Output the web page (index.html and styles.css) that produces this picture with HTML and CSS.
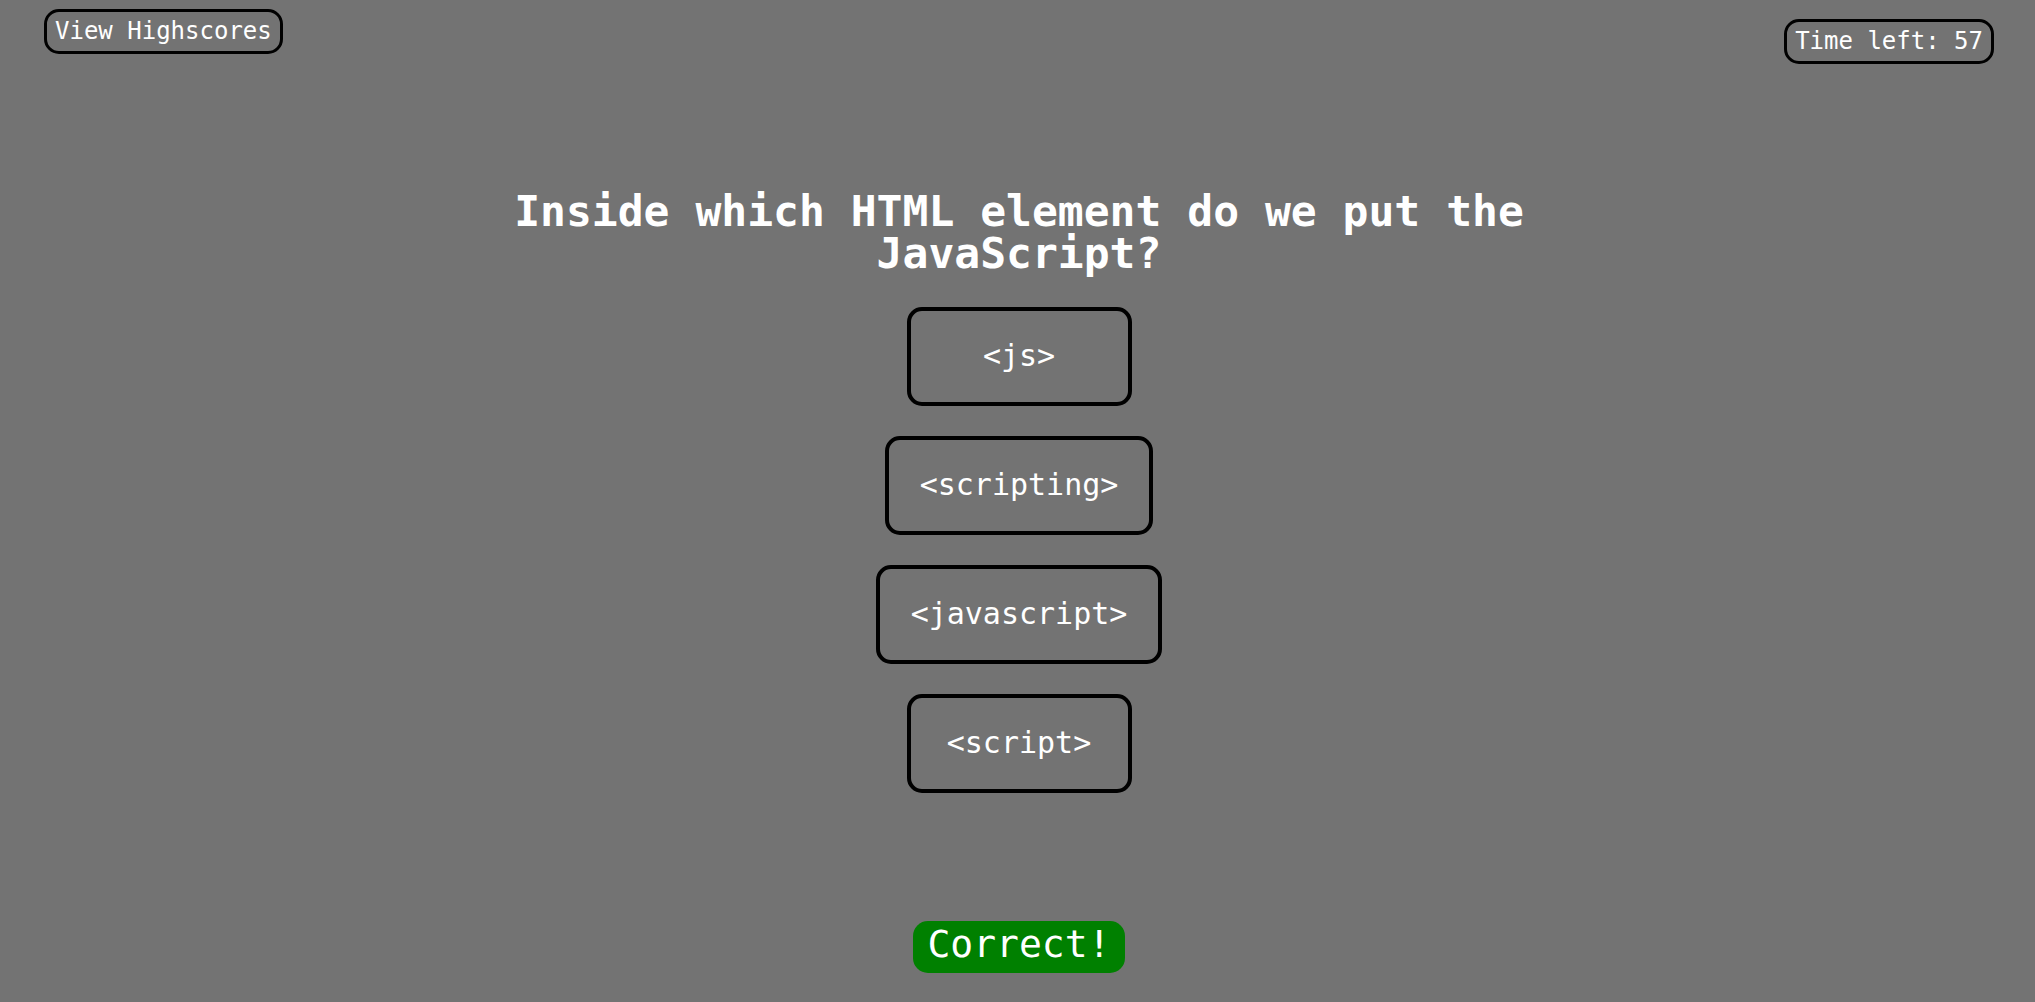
FILE: index.html
```html
<!DOCTYPE html>
<html lang="en">
<head>
  <meta charset="utf-8">
  <meta name="viewport" content="width=device-width, initial-scale=1">
  <title>Code Quiz</title>
  <link rel="stylesheet" href="styles.css">
</head>
<body>
  <header class="topbar">
    <button class="pill" type="button">View Highscores</button>
    <div class="pill timer">Time left: 57</div>
  </header>
  <main class="quiz">
    <h1 class="question">Inside which HTML element do we put the JavaScript?</h1>
    <div class="answers">
      <button class="answer" type="button">&lt;js&gt;</button>
      <button class="answer" type="button">&lt;scripting&gt;</button>
      <button class="answer" type="button">&lt;javascript&gt;</button>
      <button class="answer" type="button">&lt;script&gt;</button>
    </div>
    <p class="result" role="status">Correct!</p>
  </main>
</body>
</html>
```
FILE: styles.css
```css
* {
  box-sizing: border-box;
}

body {
  margin: 0;
  padding: 9px 41px 29px 44px;
  background: #737373;
  color: #fff;
  font-family: "Lucida Sans Typewriter", "DejaVu Sans Mono", monospace;
}

button {
  font-family: inherit;
  cursor: pointer;
}

.topbar {
  display: flex;
  justify-content: space-between;
  align-items: flex-start;
}

.pill {
  padding: 0 8px 1px;
  border: 3px solid #000;
  border-radius: 15px;
  background: transparent;
  color: inherit;
  font-size: 24px;
  line-height: 38px;
  white-space: nowrap;
}

.timer {
  margin-top: 10px;
}

.quiz {
  display: flex;
  flex-direction: column;
  align-items: center;
}

.question {
  max-width: 60%;
  margin: 126px 0 33px;
  font-size: 43px;
  line-height: 42px;
  text-align: center;
}

.answers {
  display: flex;
  flex-direction: column;
  align-items: center;
  gap: 30px;
}

.answer {
  min-width: 225px;
  padding: 28px 31px 29px;
  border: 4px solid #000;
  border-radius: 15px;
  background: transparent;
  color: inherit;
  font-size: 30px;
  line-height: 34px;
  white-space: nowrap;
}

.result {
  margin: 128px 0 0;
  padding: 0 14px 6px;
  border-radius: 15px;
  background: #008000;
  font-size: 38px;
  line-height: 46px;
}
```
